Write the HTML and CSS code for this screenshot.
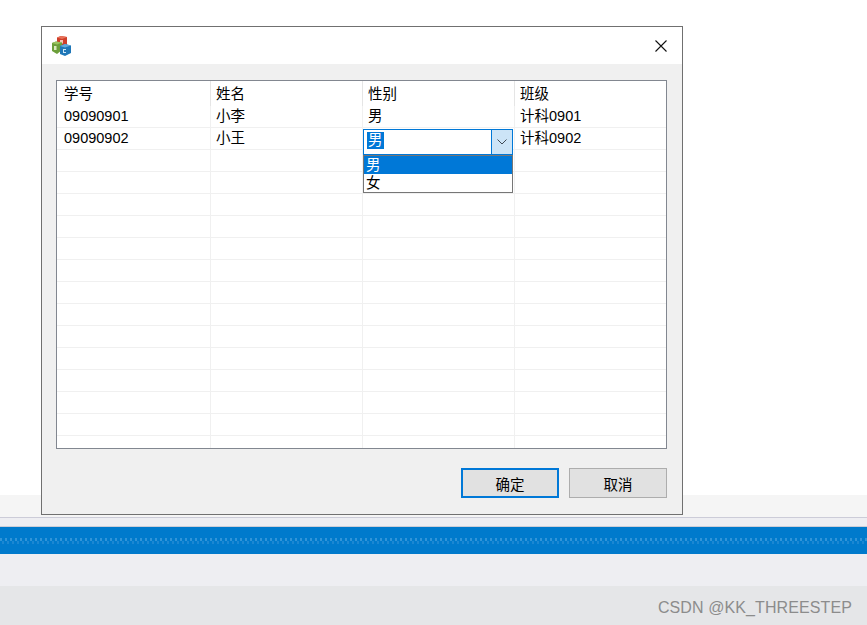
FILE: index.html
```html
<!DOCTYPE html>
<html lang="zh-CN">
<head>
<meta charset="utf-8">
<title>MFC</title>
<link rel="stylesheet" href="styles.css">
</head>
<body>
<div class="desktop">
  <div class="top"></div>
  <div class="band-light"></div>
  <div class="band-menu"></div>
  <div class="band-blue"><div class="dots"></div></div>
  <div class="band-menu2"></div>
  <div class="band-foot"><span class="mark">CSDN @KK_THREESTEP</span></div>

  <section class="dialog">
    <header class="titlebar">
      <svg class="appicon" width="20" height="21" viewBox="0 0 20 21">
        <path d="M6 2.5 10 1l6 1v8l-5 2-5-2z" fill="#cf3f2a"/>
        <path d="M10 1l6 1-5 2-5-1.500z" fill="#e8735a"/>
        <path d="M9 5h3v3.500H9z" fill="#f3c4b4"/>
        <path d="M1 8l4-1.500 6 1V15l-5 4-5-3z" fill="#6c9f3a"/>
        <path d="M5 6.500l6 1-5 2-5-1.500z" fill="#9cc45f"/>
        <path d="M3 11h2.500v4H3z" fill="#dbe9bf"/>
        <path d="M9 11l5-2 6 1.500V18l-6 3-5-2z" fill="#1f77b8"/>
        <path d="M14 9l6 1.500-6 2-5-1.500z" fill="#63a9dc"/>
        <path d="M12 14h3v1h-2v2h2v1h-3z" fill="#cfe6f6"/>
      </svg>
      <svg class="close" width="12" height="12" viewBox="0 0 12 12">
        <path d="M.5.500l11 11M11.500.500l-11 11" stroke="#111" stroke-width="1.100" fill="none"/>
      </svg>
    </header>
    <div class="content">
      <div class="grid">
        <div class="row head"><div class="c">学号</div><div class="c">姓名</div><div class="c">性别</div><div class="c">班级</div></div>
        <div class="rows">
          <div class="row"><div class="c">09090901</div><div class="c">小李</div><div class="c">男</div><div class="c">计科0901</div></div>
          <div class="row"><div class="c">09090902</div><div class="c">小王</div><div class="c"></div><div class="c">计科0902</div></div>
          <div class="row"><div class="c"></div><div class="c"></div><div class="c"></div><div class="c"></div></div>
          <div class="row"><div class="c"></div><div class="c"></div><div class="c"></div><div class="c"></div></div>
          <div class="row"><div class="c"></div><div class="c"></div><div class="c"></div><div class="c"></div></div>
          <div class="row"><div class="c"></div><div class="c"></div><div class="c"></div><div class="c"></div></div>
          <div class="row"><div class="c"></div><div class="c"></div><div class="c"></div><div class="c"></div></div>
          <div class="row"><div class="c"></div><div class="c"></div><div class="c"></div><div class="c"></div></div>
          <div class="row"><div class="c"></div><div class="c"></div><div class="c"></div><div class="c"></div></div>
          <div class="row"><div class="c"></div><div class="c"></div><div class="c"></div><div class="c"></div></div>
          <div class="row"><div class="c"></div><div class="c"></div><div class="c"></div><div class="c"></div></div>
          <div class="row"><div class="c"></div><div class="c"></div><div class="c"></div><div class="c"></div></div>
          <div class="row"><div class="c"></div><div class="c"></div><div class="c"></div><div class="c"></div></div>
          <div class="row"><div class="c"></div><div class="c"></div><div class="c"></div><div class="c"></div></div>
          <div class="row"><div class="c"></div><div class="c"></div><div class="c"></div><div class="c"></div></div>
          <div class="row"><div class="c"></div><div class="c"></div><div class="c"></div><div class="c"></div></div>
          <div class="combo">
            <div class="edit"><span class="sel">男</span></div>
            <div class="arrow">
              <svg width="10" height="6" viewBox="0 0 10 6"><path d="M.5.500 5 5 9.500.500" fill="none" stroke="#3f4a55" stroke-width="1"/></svg>
            </div>
          </div>
          <div class="list">
            <div class="opt on">男</div>
            <div class="opt">女</div>
          </div>
        </div>
      </div>
      <div class="buttons">
        <button class="btn primary">确定</button>
        <button class="btn">取消</button>
      </div>
    </div>
  </section>
</div>
</body>
</html>
```
FILE: styles.css
```css
html, body {
  margin: 0;
  padding: 0;
  background: #fff;
}
.desktop {
  position: relative;
  width: 867px;
  height: 625px;
  overflow: hidden;
  display: flex;
  flex-direction: column;
  font-family: "Liberation Sans", "Noto Sans CJK SC", sans-serif;
  font-size: 14.5px;
  color: #000;
}
.top { height: 495px; background: #fff; }
.band-light { height: 22px; background: #f5f5f5; }
.band-menu {
  height: 8px;
  background: #eeeef2;
  border-top: 1px solid #ccccd8;
  border-bottom: 1px solid #ccced8;
}
.band-blue {
  height: 27px;
  background: #007acc;
  display: flex;
  align-items: center;
}
.dots {
  width: 100%;
  height: 6px;
  background-image:
    linear-gradient(90deg, #3295d8 40%, transparent 40%),
    linear-gradient(90deg, #1b87d2 40%, transparent 40%);
  background-size: 5px 3px, 5px 3px;
  background-position: 0 0, 2px 3px;
  background-repeat: repeat-x;
}
.band-menu2 { height: 32px; background: #eeeef2; }
.band-foot {
  flex: 1;
  background: #e5e6e8;
  display: flex;
  justify-content: flex-end;
  align-items: center;
  padding: 0 15px 0 0;
}
.mark {
  font-size: 16px;
  color: #8c8c8c;
  letter-spacing: 0.1px;
  position: relative;
  top: 2px;
}

.dialog {
  position: absolute;
  left: 41px;
  top: 26px;
  width: 640px;
  height: 487px;
  border: 1px solid #707070;
  background: #f0f0f0;
  display: flex;
  flex-direction: column;
}
.titlebar {
  height: 37px;
  background: #fff;
  display: flex;
  align-items: center;
  justify-content: space-between;
  padding: 0 15px 0 9px;
  flex: none;
}
.content {
  flex: 1;
  display: flex;
  flex-direction: column;
  padding: 16px 15px 16px 14px;
}
.grid {
  height: 367px;
  border: 1px solid #828790;
  background: #fff;
  overflow: hidden;
  flex: none;
}
.row {
  display: grid;
  grid-template-columns: 154px 152px 152px 152px;
  height: 22px;
  box-sizing: border-box;
  border-bottom: 1px solid #f0f0f0;
}
.c {
  border-right: 1px solid #f0f0f0;
  padding-left: 7px;
  line-height: 21px;
  white-space: nowrap;
}
.c + .c { padding-left: 5px; }
.head {
  height: 25px;
  border-bottom: 0;
}
.head .c {
  border-right-color: #e5e5e5;
  line-height: 27px;
}
.rows { position: relative; }

.combo {
  position: absolute;
  left: 306px;
  top: 23px;
  width: 150px;
  height: 26px;
  box-sizing: border-box;
  border: 1px solid #0078d7;
  background: #fff;
  display: flex;
}
.edit {
  flex: 1;
  padding: 2px 0 0 3px;
  line-height: 17px;
}
.sel {
  display: inline-block;
  background: #0078d7;
  color: #fff;
  height: 17px;
  padding: 0 1px;
}
.arrow {
  width: 20px;
  background: #cce4f7;
  border-left: 1px solid #0078d7;
  display: flex;
  align-items: center;
  justify-content: center;
}
.list {
  position: absolute;
  left: 306px;
  top: 49px;
  width: 150px;
  height: 38px;
  box-sizing: border-box;
  border: 1px solid #767676;
  background: #fff;
}
.opt {
  height: 18px;
  line-height: 18px;
  padding-left: 2px;
}
.opt.on {
  background: #0078d7;
  color: #fff;
}

.buttons {
  margin-top: 19px;
  display: flex;
  justify-content: flex-end;
  gap: 10px;
}
.btn {
  width: 98px;
  height: 30px;
  box-sizing: border-box;
  border: 1px solid #adadad;
  background: #e1e1e1;
  font: inherit;
  color: #000;
  padding: 0;
}
.primary { border: 2px solid #0078d7; }
```
